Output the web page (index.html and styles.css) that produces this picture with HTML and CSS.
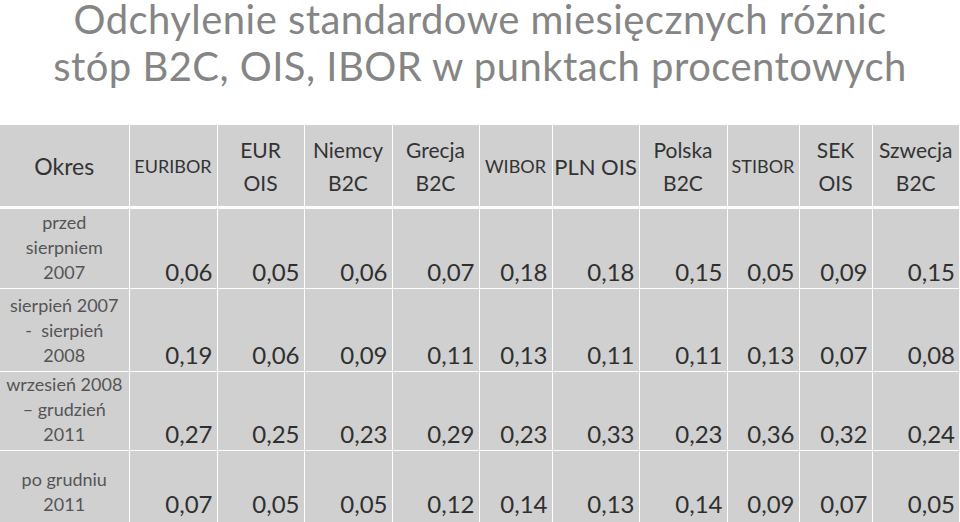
FILE: index.html
```html
<!DOCTYPE html>
<html lang="pl">
<head>
<meta charset="utf-8">
<title>Odchylenie standardowe</title>
<link rel="stylesheet" href="styles.css">
</head>
<body>
<div class="slide">
  <h1 class="title">Odchylenie standardowe miesięcznych różnic<br>stóp B2C, OIS, IBOR w punktach procentowych</h1>
  <table class="grid">
    <colgroup>
      <col class="c-okres"><col class="c-w88"><col class="c-w87"><col class="c-w88"><col class="c-w87"><col class="c-w73"><col class="c-w87"><col class="c-w88"><col class="c-w72"><col class="c-w73"><col class="c-w87">
    </colgroup>
    <thead>
      <tr>
        <th class="big">Okres</th>
        <th class="small">EURIBOR</th>
        <th>EUR<br>OIS</th>
        <th>Niemcy<br>B2C</th>
        <th>Grecja<br>B2C</th>
        <th class="small">WIBOR</th>
        <th class="mid">PLN OIS</th>
        <th>Polska<br>B2C</th>
        <th class="small">STIBOR</th>
        <th>SEK<br>OIS</th>
        <th>Szwecja<br>B2C</th>
      </tr>
    </thead>
    <tbody>
      <tr class="r1">
        <td class="lbl">przed<br>sierpniem<br>2007</td>
        <td>0,06</td><td>0,05</td><td>0,06</td><td>0,07</td><td>0,18</td><td>0,18</td><td>0,15</td><td>0,05</td><td>0,09</td><td>0,15</td>
      </tr>
      <tr class="r2">
        <td class="lbl">sierpień 2007<br>-&nbsp; sierpień<br>2008</td>
        <td>0,19</td><td>0,06</td><td>0,09</td><td>0,11</td><td>0,13</td><td>0,11</td><td>0,11</td><td>0,13</td><td>0,07</td><td>0,08</td>
      </tr>
      <tr class="r3">
        <td class="lbl">wrzesień 2008<br>– grudzień<br>2011</td>
        <td>0,27</td><td>0,25</td><td>0,23</td><td>0,29</td><td>0,23</td><td>0,33</td><td>0,23</td><td>0,36</td><td>0,32</td><td>0,24</td>
      </tr>
      <tr class="r4">
        <td class="lbl">po grudniu<br>2011</td>
        <td>0,07</td><td>0,05</td><td>0,05</td><td>0,12</td><td>0,14</td><td>0,13</td><td>0,14</td><td>0,09</td><td>0,07</td><td>0,05</td>
      </tr>
    </tbody>
  </table>
</div>
</body>
</html>
```
FILE: styles.css
```css
html, body {
  margin: 0;
  padding: 0;
  background: #ffffff;
}
body {
  font-family: Lato, "Open Sans", "Noto Sans", sans-serif;
  width: 960px;
  height: 522px;
  overflow: hidden;
}
.slide {
  display: flex;
  flex-direction: column;
}
.title {
  margin: 0;
  height: 125px;
  font-size: 40px;
  line-height: 47px;
  letter-spacing: 0.45px;
  font-weight: 400;
  color: #858585;
  text-align: center;
  position: relative;
  top: -4px;
}
.grid {
  border-collapse: collapse;
  table-layout: fixed;
  width: 959px;
}
.c-okres { width: 129px; }
.c-w88 { width: 88px; }
.c-w87 { width: 87px; }
.c-w73 { width: 73px; }
.c-w72 { width: 72px; }
.grid th, .grid td {
  background: #d0d0d0;
  border: 1px solid #ffffff;
  padding: 0;
  box-sizing: border-box;
}
.grid tr > :first-child { border-left: 0; }
.grid tr > :last-child { border-right: 0; }
.grid thead tr > * { border-top: 0; }
.grid thead th {
  height: 82px;
  font-weight: 400;
  font-size: 21px;
  line-height: 33px;
  color: #333333;
  text-align: center;
  vertical-align: middle;
  white-space: nowrap;
  border-bottom: 3px solid #ffffff;
  padding-top: 2px;
}
.grid thead th.big { font-size: 23px; }
.grid thead th.mid { font-size: 22px; }
.grid thead th.small { font-size: 18px; }
.grid td {
  font-size: 24px;
  line-height: 28px;
  color: #2f2f2f;
  text-align: right;
  vertical-align: bottom;
  padding-right: 4px;
  padding-bottom: 2px;
}
.grid td.lbl {
  font-size: 18px;
  line-height: 25px;
  color: #555555;
  text-align: center;
  padding-right: 0;
  padding-bottom: 3px;
}
.r1 > td { height: 81px; }
.r2 > td { height: 83px; }
.r3 > td { height: 79px; }
.r4 > td { height: 76px; padding-bottom: 8px; }
.r4 > td.lbl { padding-bottom: 9px; }
```
